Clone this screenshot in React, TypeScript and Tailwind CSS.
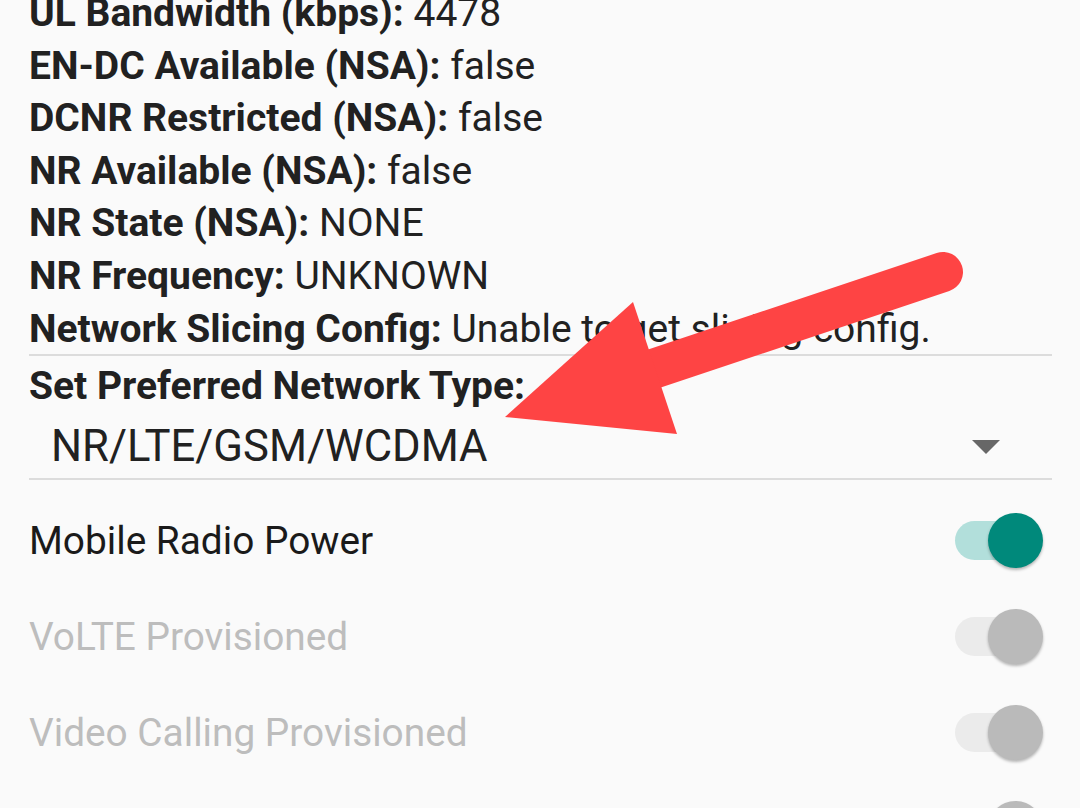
import React from "react";

const info: [string, string][] = [
  ["UL Bandwidth (kbps):", "4478"],
  ["EN-DC Available (NSA):", "false"],
  ["DCNR Restricted (NSA):", "false"],
  ["NR Available (NSA):", "false"],
  ["NR State (NSA):", "NONE"],
  ["NR Frequency:", "UNKNOWN"],
  ["Network Slicing Config:", "Unable to get slicing config."],
];

function Toggle({ on, disabled }: { on: boolean; disabled?: boolean }) {
  const track = disabled ? "bg-[#ebebeb]" : on ? "bg-[#b2dfdb]" : "bg-[#c4c4c4]";
  const thumb = disabled ? "bg-[#bababa]" : on ? "bg-[#00897b]" : "bg-[#f1f1f1]";
  return (
    <div className="relative w-[88px] h-[56px] shrink-0">
      <div className={"absolute left-0 top-[8px] w-[80px] h-[39px] rounded-full " + track} />
      <div
        className={
          "absolute right-0 top-0 w-[55px] h-[55px] rounded-full shadow-[0_2px_3px_rgba(0,0,0,0.28)] " +
          thumb
        }
      />
    </div>
  );
}

function Row({ label, on, disabled }: { label: string; on: boolean; disabled?: boolean }) {
  return (
    <div className="flex items-center justify-between h-[96px] pl-[29px] pr-[37px]">
      <span
        className={
          "text-[38.8px] leading-[48px] whitespace-nowrap " +
          (disabled ? "text-[#bdbdbd]" : "text-[#1a1a1a]")
        }
      >
        {label}
      </span>
      <Toggle on={on} disabled={disabled} />
    </div>
  );
}

export default function App() {
  return (
    <div className="relative w-[1080px] h-[808px] overflow-hidden bg-[#fafafa] font-['Roboto',sans-serif]">
      <div className="pl-[29px] pr-[28px] mt-[-13px]">
        <div className="flex flex-col text-[39px] leading-[52.6px] text-[#212121]">
          {info.map(([k, v]) => (
            <div key={k} className="whitespace-nowrap">
              <span className="font-bold">{k}</span> <span>{v}</span>
            </div>
          ))}
        </div>
        <div className="h-[2px] bg-[#dcdcdc] mt-[-1px]" />
        <div className="text-[39px] leading-[52.6px] text-[#212121] font-bold mt-[4px] whitespace-nowrap">
          Set Preferred Network Type:
        </div>
        <div className="flex items-center justify-between h-[65px] pt-[4px] pl-[22px] pr-[52px]">
          <span className="text-[43.6px] leading-[52px] text-[#212121]">NR/LTE/GSM/WCDMA</span>
          <svg width="28" height="14" viewBox="0 0 28 14">
            <polygon points="0,0 28,0 14,14" fill="#676767" />
          </svg>
        </div>
        <div className="h-[2px] bg-[#dcdcdc]" />
      </div>
      <div className="flex flex-col pt-[13px]">
        <Row label="Mobile Radio Power" on />
        <Row label="VoLTE Provisioned" on disabled />
        <Row label="Video Calling Provisioned" on disabled />
        <Row label="" on disabled />
      </div>
      <svg className="absolute left-0 top-0 pointer-events-none" width="1080" height="808" viewBox="0 0 1080 808">
        <line x1="943" y1="272" x2="650" y2="370" stroke="#fe4444" strokeWidth="40" strokeLinecap="round" />
        <polygon points="633,302 505,417 677,434" fill="#fe4444" />
      </svg>
    </div>
  );
}
